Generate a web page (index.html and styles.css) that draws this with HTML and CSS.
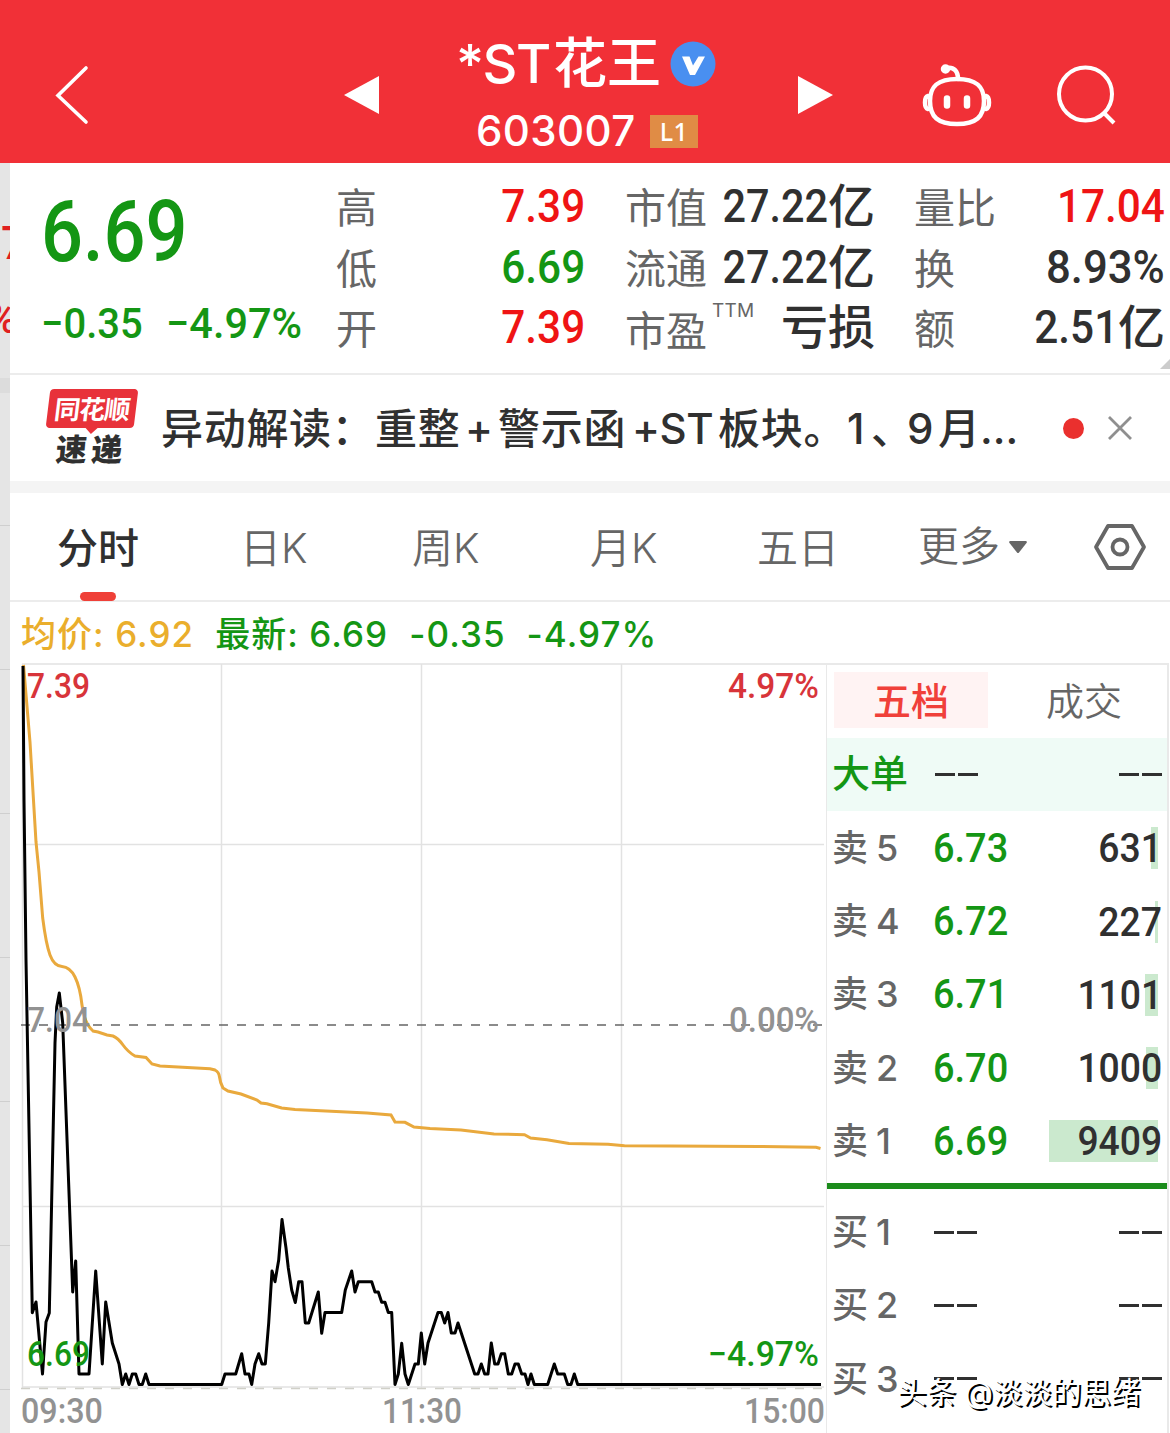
FILE: index.html
```html
<!DOCTYPE html>
<html lang="zh-CN">
<head>
<meta charset="utf-8">
<title>*ST花王 603007</title>
<link rel="stylesheet" href="styles.css">
</head>
<body>
<header class="topbar">
  <svg class="back" viewBox="0 0 34 60"><path d="M31 3 3 30.500 31 57"/></svg>
  <svg class="tri prev" viewBox="0 0 35 38"><path d="M0 19 35 0V38Z"/></svg>
  <div class="title">
    <div class="name"><span class="name-latin">*ST</span><span class="name-cjk">花王</span>
      <svg class="verified" viewBox="0 0 46 46"><circle cx="23" cy="23" r="22.500"/><path d="M12 15.500h7.500l3.500 9 5.500-9H35L25 34h-5Z"/></svg>
    </div>
    <div class="code"><span>603007</span><b class="level">L1</b></div>
  </div>
  <svg class="tri next" viewBox="0 0 35 38"><path d="M35 19 0 0V38Z"/></svg>
  <svg class="robot" viewBox="0 0 70 64">
    <path d="M25 4c7-1 11 3 11 11" /><circle cx="23.500" cy="5" r="2.500" class="solid"/>
    <path d="M35 15c19 0 27 7 27 22 0 16-8 23-27 23S8 53 8 37c0-15 8-22 27-22Z"/>
    <path d="M6 32C2 33 2 44 6 45M64 32c4 1 4 12 0 13"/>
    <path d="M25 34.500v7M45 34.500v7" class="eyes"/>
  </svg>
  <svg class="search" viewBox="0 0 60 60"><circle cx="28.500" cy="29" r="26.500"/><path d="m47 48 10 10"/></svg>
</header>

<div class="screen">
  <aside class="peek"><span class="peek-seven">7</span><span class="peek-pct">%</span><i class="band"></i><i class="rows"></i></aside>
  <main>
    <section class="quote">
      <div class="last">
        <div class="price"><span class="din">6.69</span></div>
        <div class="change"><span class="din">−0.35</span><span class="din">−4.97%</span></div>
      </div>
      <dl class="col c1">
        <div><dt>高</dt><dd class="up"><span class="din">7.39</span></dd></div>
        <div><dt>低</dt><dd class="down"><span class="din">6.69</span></dd></div>
        <div><dt>开</dt><dd class="up"><span class="din">7.39</span></dd></div>
      </dl>
      <dl class="col c2">
        <div><dt>市值</dt><dd><span class="din">27.22</span>亿</dd></div>
        <div><dt>流通</dt><dd><span class="din">27.22</span>亿</dd></div>
        <div><dt class="pe">市盈<sup>TTM</sup></dt><dd>亏损</dd></div>
      </dl>
      <dl class="col c3">
        <div><dt>量比</dt><dd class="up"><span class="din">17.04</span></dd></div>
        <div><dt>换</dt><dd><span class="din pct">8.93%</span></dd></div>
        <div><dt>额</dt><dd><span class="din">2.51</span>亿</dd></div>
      </dl>
      <i class="corner"></i>
    </section>

    <section class="news">
      <div class="logo">
        <div class="logo-top"><span>同花顺</span></div>
        <div class="logo-bottom">速递</div>
      </div>
      <p><span class="n1">异动解读：</span><span class="n2">重整</span><span class="n3">+</span><span class="n4">警示函</span><span class="n5">+ST</span><span class="n6">板块。</span><span class="n7">1</span><span class="n8">、</span><span class="n9">9</span><span class="n10">月</span><span class="n11">...</span></p>
      <i class="dot"></i>
      <svg class="close" viewBox="0 0 24 24"><path d="m1 1 22 22M23 1 1 23"/></svg>
    </section>

    <nav class="tabs">
      <a class="active">分时</a><a>日K</a><a>周K</a><a>月K</a><a>五日</a><a class="more">更多<svg viewBox="0 0 18 12"><path d="M1 0h16q1.500.5.5 2L10 11.500q-1 1-2 0L.5 2Q-.5.500 1 0Z"/></svg></a>
      <svg class="gear" viewBox="0 0 52 46"><path d="M14 2h24l12 21-12 21H14L2 23Z"/><circle cx="26" cy="23" r="7.500"/></svg>
    </nav>

    <div class="legend"><span class="avg">均价: 6.92</span><span>最新: 6.69</span><span>-0.35</span><span>-4.97%</span></div>

    <section class="market">
      <svg class="chart" viewBox="10 663 816 770">
        <g class="grid">
          <path d="M22.500 664V1388M221.500 664V1388M421.500 664V1388M621.500 664V1388"/>
          <path d="M22 664H826M22 844.500H824M22 1206.500H824M22 1387H824"/>
        </g>
        <path class="base" d="M21 1388.500H822"/>
        <path class="mid" d="M21 1025H822"/>
        <path class="avg-line" d="M23.500 665 30 742 36 842 39 872 42.700 918Q46 944 50 955T62 966.500 75 977 82 1005 93 1031L98 1032 107 1035 113 1036Q118 1038 123 1045T135 1056L146 1057.500 152 1064 160 1066 210 1068.700 215 1070Q219 1072 219.500 1077T223 1088L228 1091 241 1094 257 1100 261 1103 267 1103.700 281.600 1108 295 1109.500 367 1113 391 1115 395 1122 405 1122.300 414 1127 430 1128.500 461 1130 494 1134 524.500 1134.700 530.600 1138 547 1139.700 569 1143.500 608 1144.300 624.500 1145.700 759 1146.500 816 1147.300 820.500 1148.500"/>
        <polyline class="price-line" points="23,666 24,800 26,960 32.300,1312.700 36,1302 42.500,1374 46,1322 49.300,1313 55,1043 56.700,1007 59.300,993 62.700,1023 72.700,1292 75.700,1261 79,1374 89,1374 95.700,1271 102.300,1364 105.700,1302 112.300,1343 119,1364 122.300,1384.500 125.700,1374 129,1384.500 132.300,1374 135.700,1374 139,1384.500 142.300,1384.500 145.700,1374 149,1384.500 221.700,1384.500 225,1374 235.700,1374 241.700,1353.700 245,1374 249,1374 251.700,1384.500 255,1364 258.700,1353.700 262,1364 265.300,1364 268.700,1323 272,1271 275,1281.700 278.700,1260 282,1219.500 286,1248 288.300,1268 291.700,1290 295.300,1302.500 298.700,1281.700 302,1281.700 305.300,1323 308.700,1323 318.300,1292 321.700,1333.300 325,1312.500 341.700,1312.500 345.300,1290 351.700,1271 355,1292 358.300,1281.700 371.700,1281.700 375,1292 378.300,1292 381.700,1302.300 385,1302.300 388.300,1312.500 391.700,1312.500 395,1384.500 398.300,1374 401.700,1343.300 405,1374 408.300,1384.500 415,1364 418.300,1364 421.300,1333 424.700,1364 428,1343 438,1312.500 441.300,1312.500 444.700,1323 448,1312.500 451.300,1333 455,1333 458,1323 474.700,1374 478,1374 481.300,1364 484.700,1374 488,1374 491.300,1343 494.700,1364 498,1364 501.300,1353.700 504.700,1353.700 508.300,1374 511.700,1374 515,1364 518.300,1364 521.700,1374 525,1374 528,1384.500 531,1374 534.300,1384.500 547.700,1384.500 554.300,1364 557.700,1374 564.300,1374 567.700,1384.500 571,1384.500 574.300,1374 577.700,1384.500 821,1384.500"/>
        <g class="labels">
          <text class="hi" x="27" y="698" textLength="63" lengthAdjust="spacingAndGlyphs">7.39</text>
          <text class="hi" x="728" y="698" textLength="91" lengthAdjust="spacingAndGlyphs">4.97%</text>
          <text x="27" y="1032" textLength="63" lengthAdjust="spacingAndGlyphs">7.04</text>
          <text x="729" y="1032" textLength="90" lengthAdjust="spacingAndGlyphs">0.00%</text>
          <text class="lo" x="27" y="1366" textLength="63" lengthAdjust="spacingAndGlyphs">6.69</text>
          <text class="lo" x="708" y="1366" textLength="111" lengthAdjust="spacingAndGlyphs">−4.97%</text>
          <text x="21" y="1423" textLength="82" lengthAdjust="spacingAndGlyphs">09:30</text>
          <text x="382" y="1423" textLength="80" lengthAdjust="spacingAndGlyphs">11:30</text>
          <text x="744" y="1423" textLength="81" lengthAdjust="spacingAndGlyphs">15:00</text>
        </g>
      </svg>

      <div class="book">
        <div class="book-tabs"><b>五档</b><span>成交</span></div>
        <div class="row big"><b>大单</b><i class="dash"></i><i class="dash end"></i></div>
        <div class="row"><span class="side">卖<em>5</em></span><span class="px"><span class="din">6.73</span></span><span class="vol"><i class="bar" style="width:7px"></i><span class="din">631</span></span></div>
        <div class="row"><span class="side">卖<em>4</em></span><span class="px"><span class="din">6.72</span></span><span class="vol"><i class="bar" style="width:3px"></i><span class="din">227</span></span></div>
        <div class="row"><span class="side">卖<em>3</em></span><span class="px"><span class="din">6.71</span></span><span class="vol"><i class="bar" style="width:13px"></i><span class="din">1101</span></span></div>
        <div class="row"><span class="side">卖<em>2</em></span><span class="px"><span class="din">6.70</span></span><span class="vol"><i class="bar" style="width:12px"></i><span class="din">1000</span></span></div>
        <div class="row"><span class="side">卖<em>1</em></span><span class="px"><span class="din">6.69</span></span><span class="vol"><i class="bar" style="width:109px"></i><span class="din">9409</span></span></div>
        <hr>
        <div class="row"><span class="side">买<em>1</em></span><i class="dash"></i><i class="dash end"></i></div>
        <div class="row"><span class="side">买<em>2</em></span><i class="dash"></i><i class="dash end"></i></div>
        <div class="row"><span class="side">买<em>3</em></span><i class="dash"></i><i class="dash end"></i></div>
      </div>
    </section>
  </main>
</div>
<div class="watermark">头条 @淡淡的思绪</div>
</body>
</html>
```
FILE: styles.css
```css
* { box-sizing: border-box; }
body {
  margin: 0; width: 1170px; height: 1433px; overflow: hidden; position: relative;
  background: #fff; color: #303030;
  font-family: Inter, "Noto Sans CJK SC", sans-serif; font-weight: 500;
  white-space: nowrap;
}
svg { display: block; flex: none; overflow: visible; }
i, em { font-style: normal; }
p, dl, dd, dt { margin: 0; }
.din { font-family: Roboto, "Noto Sans CJK SC", sans-serif; display: inline-block; transform: scaleX(.9); transform-origin: 100% 50%; }
.up { color: #ef1414; }
.down { color: #149614; }

/* top bar */
.topbar { height: 163px; background: #f13037; color: #fff; display: flex; align-items: flex-start; }
.back { width: 34px; height: 60px; margin: 65px 0 0 55px; fill: none; stroke: #fff; stroke-width: 3.600; stroke-linecap: round; }
.tri { width: 35px; height: 38px; margin-top: 76px; fill: #fff; }
.prev { margin-left: 255px; }
.title { width: 419px; padding-top: 33px; }
.name { display: flex; align-items: center; height: 62px; padding-left: 77px; }
.name-latin { width: 97px; font-size: 54px; line-height: 62px; letter-spacing: -1.500px; }
.name-cjk { width: 117px; font-size: 54px; line-height: 62px; }
.verified { width: 46px; height: 46px; }
.verified circle { fill: #498ff0; }
.verified path { fill: #fff; }
.code { display: flex; align-items: center; height: 36px; margin-top: 18px; padding-left: 97px; font-size: 42px; line-height: 36px; letter-spacing: .4px; }
.code span { width: 174px; }
.level { width: 48px; height: 33px; background: #e08c45; font: 500 25px/33px "Noto Sans", sans-serif; text-align: center; }
.robot { width: 70px; height: 64px; margin: 64px 0 0 89px; fill: none; stroke: #fff; stroke-width: 4.500; stroke-linecap: round; }
.robot .solid { fill: #fff; }
.robot .eyes { stroke-width: 6.500; }
.search { width: 60px; height: 60px; margin: 65px 0 0 65px; fill: none; stroke: #fff; stroke-width: 4; }

/* underlying page edge */
.screen { display: flex; }
.peek { width: 10px; height: 1270px; flex: none; overflow: hidden; background: #e5e5e5; display: flex; flex-direction: column; color: #e02020; font-family: Roboto, sans-serif; }
.peek-seven { height: 90px; padding-top: 53px; line-height: 54px; font-size: 46px; margin-left: 1px; }
.peek-pct { height: 125px; padding-top: 38px; line-height: 54px; font-size: 43px; margin-left: -14px; }
.band { height: 15px; background: #dcdcdc; }
.rows { flex: 1; background: repeating-linear-gradient(#e5e5e5 0 132px, #cfcfcf 132px 133px, #e5e5e5 133px 144px); }
main { width: 1160px; flex: none; }

/* quote */
.quote { position: relative; height: 212px; display: flex; border-bottom: 2px solid #ececec; padding-top: 14px; }
.last { width: 326px; color: #149614; padding-left: 33px; }
.last .din { transform-origin: 0 50%; }
.price { height: 110px; line-height: 107px; font-size: 85px; margin-left: -2px; }
.price .din { transform: scaleX(.87); }
.change { display: flex; height: 74px; line-height: 73px; font-size: 43px; margin-left: -2px; }
.change .din { transform: scaleX(.93); }
.change .din:first-child { width: 125px; }
.change .din:last-child { transform: scaleX(.965); }
.col { display: flex; flex-direction: column; }
.col > div { height: 60.500px; display: flex; justify-content: space-between; align-items: center; line-height: 60px; }
.col dt { color: #666; font-size: 41px; font-weight: 400; padding-top: 2px; }
.col dd { font-size: 47px; display: flex; margin-top: -2px; }
.c1 { width: 249px; margin-right: 40px; }
.c2 { width: 250px; margin-right: 39px; }
.c3 { width: 251px; }
.c2 .din { transform: scaleX(.88); }
.col .pct { transform: scaleX(.93); }
.col .pe { display: flex; padding-top: 6px; }
.pe sup { font: 400 19px/19px Inter, sans-serif; letter-spacing: .2px; margin: 0 0 0 5px; }
.corner { position: absolute; right: 0; bottom: 4px; border: 5px solid #ccc; border-top-color: transparent; border-left-color: transparent; }

/* news */
.news { height: 118px; display: flex; align-items: center; border-bottom: 12px solid #f4f4f4; padding-left: 35px; }
.logo { width: 92px; height: 78px; margin-right: 24px; }
.logo-top { position: relative; width: 88px; height: 39px; margin-left: 3px; background: #e8323a; border-radius: 4px; transform: skewX(-7deg); color: #fff; font-size: 26px; font-weight: 700; line-height: 41px; text-align: center; letter-spacing: -1px; }
.logo-top::after { content: ""; position: absolute; left: 40px; top: 39px; border: 6px solid transparent; border-top-color: #e8323a; border-bottom: 0; }
.logo-bottom { font-size: 31px; font-weight: 900; line-height: 38px; margin: 3px 0 0 11px; letter-spacing: 4.500px; transform: skewX(-5deg); }
.news p { display: flex; width: 912px; font-size: 42px; line-height: 60px; letter-spacing: .7px; align-items: baseline; padding-top: 1px; }
.n1 { width: 214px; } .n2 { width: 90px; } .n3 { width: 33px; } .n4 { width: 134px; } .n5 { width: 86px; } .n6 { width: 129px; } .n7 { width: 24px; } .n8 { width: 36px; } .n9 { width: 31px; } .n10 { width: 42px; }
.n5 { letter-spacing: -.5px; }
.n11 { letter-spacing: 0; }
.dot { width: 21px; height: 21px; border-radius: 50%; background: #ea302e; margin-right: 24px; margin-left: -10px; }
.close { width: 24px; height: 24px; fill: none; stroke: #8f8f8f; stroke-width: 2.800; }

/* tabs */
.tabs { height: 109px; display: flex; align-items: center; border-bottom: 2px solid #ececec; color: #666; font-size: 41px; font-weight: 350; padding-left: 47px; }
.tabs a { display: block; position: relative; line-height: 113px; height: 109px; }
.tabs a:nth-child(1) { width: 183px; }
.tabs a:nth-child(2) { width: 172px; }
.tabs a:nth-child(3) { width: 178px; }
.tabs a:nth-child(4) { width: 167px; }
.tabs a:nth-child(5) { width: 161px; }
.tabs .active { color: #303030; font-weight: 500; }
.active::after { content: ""; position: absolute; left: 23px; bottom: 0; width: 36px; height: 9px; border-radius: 5px; background: #ef4038; }
.tabs .more { display: flex; align-items: center; width: 176px; gap: 9px; }
.more svg { width: 18px; height: 12px; fill: #666; }
.gear { width: 52px; height: 46px; fill: none; stroke: #666; stroke-width: 3.800; stroke-linejoin: round; }

.legend { height: 61px; display: flex; gap: 21px; align-items: center; padding-left: 11px; font-size: 35px; line-height: 61px; padding-top: 3px; letter-spacing: 1.050px; color: #149614; }
.legend .avg { color: #eaae2c; }

/* market */
.market { display: flex; height: 770px; }
.chart { width: 816px; height: 770px; }
.grid { stroke: #e2e2e2; stroke-width: 1.500; fill: none; }
.mid, .base { fill: none; stroke: #666; stroke-width: 1.500; stroke-dasharray: 9 9; }
.base { stroke: #d0d0c8; }
.avg-line { fill: none; stroke: #e9a93d; stroke-width: 3; }
.price-line { fill: none; stroke: #000; stroke-width: 3; stroke-linejoin: round; }
.labels { font: 500 35px Roboto, sans-serif; fill: #929292; }
.labels .hi { fill: #d8343a; }
.labels .lo { fill: #149614; }

/* order book */
.book { width: 343px; border: 2px solid #e9e9e9; border-bottom: 0; border-left-width: 1px; }
.book-tabs { height: 73px; display: flex; padding: 7px 0 0 7px; font-size: 38px; line-height: 58px; }
.book-tabs b { width: 154px; height: 56px; background: #fff3f3; color: #f0403a; font-weight: 500; text-align: center; margin-right: 58px; }
.book-tabs span { color: #666; font-weight: 350; }
.row { height: 73.250px; display: flex; align-items: center; padding: 0 6px; }
.big { background: #effbf6; color: #149614; }
.big b { width: 102px; font-size: 38px; line-height: 56px; font-weight: 500; margin: -4px 1px 0 -1px; }
.side { width: 101px; display: flex; align-items: center; gap: 8px; color: #666; font-size: 36px; line-height: 56px; margin-left: -1px; margin-right: 1px; }
.px { width: 90px; color: #149614; font-size: 41px; line-height: 60px; margin-top: -1px; }
.px .din { transform-origin: 0 50%; transform: scaleX(.925); margin-left: -1px; }
.vol { flex: 1; position: relative; text-align: right; font-size: 41px; line-height: 60px; }
.vol .din { position: relative; transform: scaleX(.91); margin-right: -1px; }
.bar { position: absolute; right: 3px; top: 10px; height: 42px; background: #cbe9ce; }
.dash { width: 43px; height: 3px; background: linear-gradient(90deg, #303030 20px, transparent 20px 23px, #303030 23px); }
.end { margin-left: auto; margin-right: -1px; }
.book hr { margin: 5px 0 7px; height: 6px; border: 0; background: #1c8c1c; }

.watermark { position: absolute; left: 897px; top: 1371px; font-size: 29.500px; line-height: 42px; font-weight: 400; color: #fff; text-shadow: 2px 2px 0 #000; }
```
